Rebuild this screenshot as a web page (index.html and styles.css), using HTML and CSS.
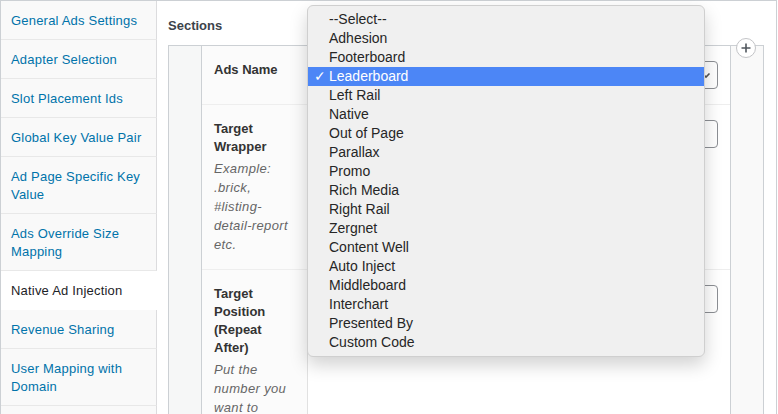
FILE: index.html
```html
<!DOCTYPE html>
<html lang="en">
<head>
<meta charset="utf-8">
<title>Native Ad Injection</title>
<link rel="stylesheet" href="styles.css">
</head>
<body>
<div class="wrap">
  <ul class="tabs">
    <li class="tab"><a href="#">General Ads Settings</a></li>
    <li class="tab"><a href="#">Adapter Selection</a></li>
    <li class="tab"><a href="#">Slot Placement Ids</a></li>
    <li class="tab"><a href="#">Global Key Value Pair</a></li>
    <li class="tab"><a href="#">Ad Page Specific Key Value</a></li>
    <li class="tab"><a href="#">Ads Override Size Mapping</a></li>
    <li class="tab active"><a href="#">Native Ad Injection</a></li>
    <li class="tab"><a href="#">Revenue Sharing</a></li>
    <li class="tab"><a href="#">User Mapping with Domain</a></li>
    <li class="tab empty"></li>
  </ul>
  <div class="main">
    <div class="heading">Sections</div>
    <div class="repeater">
      <div class="handle"></div>
      <div class="fields">
        <div class="row">
          <div class="label"><span class="name">Ads Name</span></div>
          <div class="input">
            <div class="select">
              <svg class="chev" width="10" height="10" viewBox="0 0 10 10"><path d="M1.5 3.5 L5 7 L8.5 3.5" fill="none" stroke="#555" stroke-width="1.6"/></svg>
            </div>
          </div>
        </div>
        <div class="row">
          <div class="label"><span class="name">Target Wrapper</span><p class="desc">Example: .brick, #listing-detail-report etc.</p></div>
          <div class="input"><div class="text"></div></div>
        </div>
        <div class="row">
          <div class="label"><span class="name">Target Position (Repeat After)</span><p class="desc">Put the number you want to</p></div>
          <div class="input"><div class="text"></div></div>
        </div>
      </div>
      <div class="handle right">
        <span class="add">
          <svg width="10" height="10" viewBox="0 0 10 10"><path d="M5 0.5 V9.5 M0.5 5 H9.5" stroke="#50575e" stroke-width="1.6"/></svg>
        </span>
      </div>
    </div>
  </div>
  <ul class="popup">
    <li>--Select--</li>
    <li>Adhesion</li>
    <li>Footerboard</li>
    <li class="sel"><span class="check">✓</span>Leaderboard</li>
    <li>Left Rail</li>
    <li>Native</li>
    <li>Out of Page</li>
    <li>Parallax</li>
    <li>Promo</li>
    <li>Rich Media</li>
    <li>Right Rail</li>
    <li>Zergnet</li>
    <li>Content Well</li>
    <li>Auto Inject</li>
    <li>Middleboard</li>
    <li>Interchart</li>
    <li>Presented By</li>
    <li>Custom Code</li>
  </ul>
</div>
</body>
</html>
```

FILE: styles.css
```css
* { box-sizing: border-box; }
html, body { margin: 0; padding: 0; }
body {
  width: 778px;
  height: 414px;
  overflow: hidden;
  background: #fff;
  font-family: "Liberation Sans", Arial, sans-serif;
  font-size: 13px;
  color: #333;
}
.wrap {
  position: relative;
  display: flex;
  width: 777px;
  height: 430px;
  border-top: 1px solid #ccd0d4;
  border-left: 1px solid #ccd0d4;
  border-right: 1px solid #ccd0d4;
}
.tabs {
  list-style: none;
  margin: 0;
  padding: 0;
  width: 156px;
  flex: none;
}
.tab {
  background: #f9f9f9;
  border-bottom: 1px solid #e8e8e8;
  border-right: 1px solid #dcdcde;
  padding: 11px 10px 9px 10px;
  line-height: 18px;
  letter-spacing: 0.2px;
}
.tab.empty { height: 39px; }
.tab a {
  color: #0073aa;
  text-decoration: none;
}
.tab.active {
  background: #fff;
  border-right-color: #fff;
  border-bottom-color: #fff;
}
.tab.active a { color: #1d2327; }
.main {
  flex: 1;
  padding: 16px 12px 0 11px;
}
.heading {
  font-weight: bold;
  color: #3c434a;
  line-height: 18px;
  margin-bottom: 10px;
}
.repeater {
  display: flex;
  border: 1px solid #ccd0d4;
}
.handle {
  width: 33px;
  flex: none;
  background: #f6f7f7;
  border-right: 1px solid #ccd0d4;
}
.handle.right {
  position: relative;
  background: #f9f9f9;
  border-right: none;
  border-left: 1px solid #ccd0d4;
}
.add {
  position: absolute;
  left: 5px;
  top: -8px;
  width: 20px;
  height: 20px;
  border-radius: 50%;
  border: 1px solid #c3c4c7;
  background: #fff;
  display: flex;
  align-items: center;
  justify-content: center;
}
.fields { flex: 1; }
.row {
  display: flex;
  border-bottom: 1px solid #eeeeee;
}
.label {
  width: 20%;
  flex: none;
  padding: 15px 12px;
  background: #fbfbfb;
  border-right: 1px solid #e1e1e1;
}
.name {
  display: block;
  font-weight: bold;
  line-height: 18px;
  color: #333;
}
.desc {
  margin: 3px 0 0;
  font-style: italic;
  color: #666;
  line-height: 19px;
  letter-spacing: 0.35px;
}
.input {
  flex: 1;
  padding: 15px 12px;
}
.select, .text {
  position: relative;
  height: 28px;
  border: 1px solid #8c8f94;
  border-radius: 4px;
  background: #fff;
}
.chev {
  position: absolute;
  right: 6px;
  top: 8px;
}
.popup {
  position: absolute;
  left: 306px;
  top: 4px;
  width: 398px;
  margin: 0;
  padding: 4px 0;
  list-style: none;
  background: #f0f0f0;
  border: 1px solid #cfcfcf;
  border-radius: 6px;
  box-shadow: 0 8px 18px rgba(0, 0, 0, 0.18);
  font-size: 14px;
  color: #262626;
}
.popup li {
  position: relative;
  height: 19px;
  line-height: 19px;
  padding-left: 21px;
}
.popup li.sel {
  background: #4c86f6;
  color: #fff;
}
.check {
  position: absolute;
  left: 6px;
  top: 0;
}
```
